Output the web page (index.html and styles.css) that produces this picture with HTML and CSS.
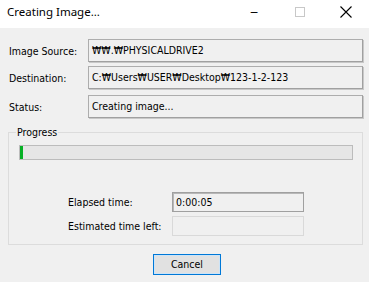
FILE: index.html
```html
<!DOCTYPE html>
<html>
<head>
<meta charset="utf-8">
<link rel="stylesheet" href="styles.css">
</head>
<body>
<div class="window">
  <div class="titlebar">
    <div class="title">Creating Image...</div>
    <div class="winbtn glyph">─</div>
    <div class="winbtn"><svg width="10" height="10" viewBox="0 0 10 10"><rect x="0.5" y="0.5" width="9" height="9" fill="none" stroke="#c8c8c8" stroke-width="1"/></svg></div>
    <div class="winbtn"><svg width="12" height="12" viewBox="0 0 12 12"><path d="M0.5 0.5 L11.5 11.5 M11.5 0.5 L0.5 11.5" stroke="#000" stroke-width="1.1"/></svg></div>
  </div>
  <div class="content">
    <div class="row r1"><span class="label">Image Source:</span><span class="field">₩₩.₩PHYSICALDRIVE2</span></div>
    <div class="row r2"><span class="label">Destination:</span><span class="field">C:₩Users₩USER₩Desktop₩123-1-2-123</span></div>
    <div class="row r3"><span class="label">Status:</span><span class="field">Creating image...</span></div>
    <fieldset class="group">
      <legend>Progress</legend>
      <div class="bar"><div class="fill" style="width:3px"></div></div>
      <div class="trow t1"><span class="tlabel">Elapsed time:</span><span class="tfield">0:00:05</span></div>
      <div class="trow t2"><span class="tlabel">Estimated time left:</span><span class="tfield disabled"></span></div>
    </fieldset>
    <div class="buttons"><button class="btn">Cancel</button></div>
  </div>
</div>
</body>
</html>
```

FILE: styles.css
```css
* { box-sizing: border-box; }
html, body { margin: 0; padding: 0; }
body { width: 369px; height: 282px; background: #f0f0f0; overflow: hidden; }
.window { width: 369px; height: 282px; display: flex; flex-direction: column; }
.titlebar {
  height: 28px; background: #fff; display: flex; align-items: flex-start;
}
.title {
  flex: 1; font-family: "Noto Sans", "Open Sans", sans-serif; font-size: 11.5px; color: #000;
  padding: 4px 0 0 7px;
}
.winbtn { width: 46px; height: 24px; display: flex; justify-content: center; align-items: center; flex: none; }
.winbtn svg { display: block; }
.glyph { font-family: "DejaVu Sans", sans-serif; font-size: 11px; line-height: 1; color: #000; padding-top: 1px; }
.content {
  flex: 1; font-family: "DejaVu Sans Condensed", "DejaVu Sans", sans-serif; font-size: 10.5px; color: #000;
  display: flex; flex-direction: column;
}
.row { display: flex; align-items: center; height: 23px; padding-left: 9px; }
.r1 { margin-top: 11px; }
.r2 { margin-top: 4px; }
.r3 { margin-top: 6px; }
.label { width: 79px; }
.field {
  width: 275px; height: 23px; border: 1px solid #adadad; border-right-color: #a0a0a0; border-bottom-color: #a0a0a0;
  box-shadow: 1px 1px 0 #c8c8c8;
  display: flex; align-items: center; padding-left: 3px; padding-bottom: 2px;
}
.group {
  margin: 8px 6px 0 8px; padding: 7px 9px 0 10px; height: 119px; width: 355px; min-width: 0;
  border: 1px solid #dcdcdc; display: flex; flex-direction: column;
}
.group legend { padding: 0 1px; margin-left: -3px; color: #000; }
.bar { height: 15px; background: #e6e6e6; border: 1px solid #bcbcbc; }
.fill { height: 100%; background: #06b025; }
.trow { display: flex; align-items: center; padding-left: 49px; }
.t1 { margin-top: 32px; height: 20px; }
.t2 { margin-top: 4px; height: 20px; }
.tlabel { width: 104px; }
.tfield {
  width: 132px; height: 20px; border: 1px solid #a0a0a0; box-shadow: inset 1px 1px 0 #b8b8b8;
  display: flex; align-items: center; padding-left: 3px; padding-bottom: 1px;
}
.tfield.disabled { border-color: #d9d9d9; box-shadow: none; }
.buttons { display: flex; padding-left: 153px; margin-top: 9px; }
.btn {
  width: 68px; height: 21px; background: #e1e1e1; border: 1px solid #0078d7;
  box-shadow: inset 0 0 0 1px #cde4f7;
  font-family: "DejaVu Sans Condensed", "DejaVu Sans", sans-serif; font-size: 10.5px; color: #000; padding: 0 0 1px 0;
}
```
